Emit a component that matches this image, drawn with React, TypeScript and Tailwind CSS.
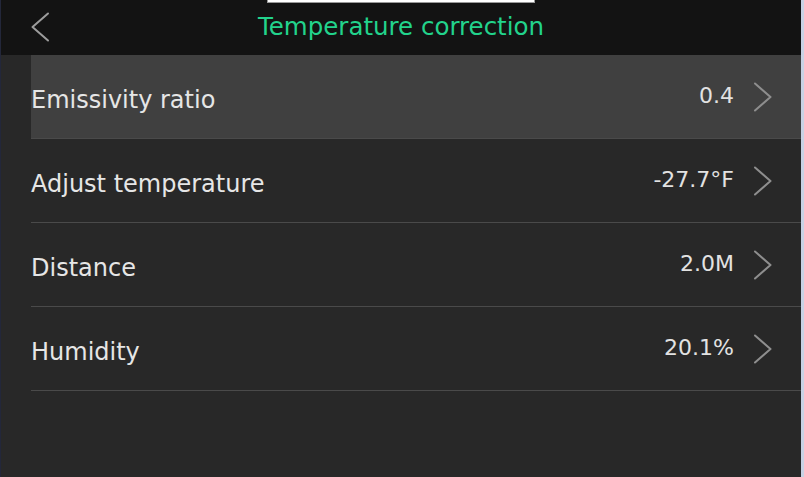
import React from "react";

const rows = [
  { label: "Emissivity ratio", value: "0.4", active: true },
  { label: "Adjust temperature", value: "-27.7°F" },
  { label: "Distance", value: "2.0M" },
  { label: "Humidity", value: "20.1%" },
];

function Chevron({ className }: { className?: string }) {
  return (
    <svg width="20" height="30" viewBox="0 0 20 30" className={className} fill="none">
      <path d="M2 1.5 L17.5 15 L2 28.5" stroke="currentColor" strokeWidth="2" strokeLinecap="round" strokeLinejoin="round" />
    </svg>
  );
}

export default function App() {
  return (
    <div
      className="relative flex w-[804px] h-[477px] overflow-hidden bg-[#282828]"
      style={{ fontFamily: '"DejaVu Sans", sans-serif' }}
    >
      <div className="w-[1px] bg-[#23273a]" />
      <div className="flex flex-1 flex-col">
        <header className="relative flex h-[55px] items-center justify-center bg-[#131313]">
          <svg width="20" height="30" viewBox="0 0 20 30" className="absolute left-[29px] top-[12px] text-[#9c9c9c]" fill="none">
            <path d="M18 1.5 L2.5 15 L18 28.5" stroke="currentColor" strokeWidth="2" strokeLinecap="round" strokeLinejoin="round" />
          </svg>
          <h1 className="text-[24.5px] leading-none text-[#22d38c] -mt-[1px]">Temperature correction</h1>
        </header>
        <div className="flex flex-col">
          {rows.map((r) => (
            <div
              key={r.label}
              className={`ml-[30px] flex h-[84px] items-center border-b border-[#4a4a4a] ${r.active ? "bg-[#404040]" : ""}`}
            >
              <span className="flex-1 text-[24px] leading-none text-[#e6e6e6] pt-[6px]">{r.label}</span>
              <span className="text-[22px] leading-none text-[#e2e2e2] mr-[19px] -mt-[1px]">{r.value}</span>
              <Chevron className="mr-[28px] text-[#8e8e8e]" />
            </div>
          ))}
        </div>
      </div>
      <div className="w-[3px] bg-[#c8d2e4]" />
      <div className="absolute left-[267px] top-0 h-[3px] w-[268px] bg-white border border-[#9a9a9a] border-t-0" />
    </div>
  );
}
